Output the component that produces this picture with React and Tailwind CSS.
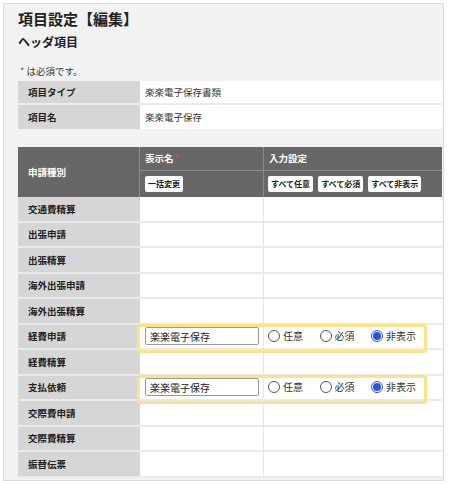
import React from "react";

const F = { fontFamily: '"Noto Sans CJK JP", "Noto Sans", sans-serif' };

function Radio({ checked, label }) {
  return (
    <div className="flex items-center w-[51.5px] shrink-0">
      {checked ? (
        <span className="w-[12px] h-[12px] rounded-full border border-[#2a56d1] flex items-center justify-center bg-white">
          <span className="w-[8px] h-[8px] rounded-full bg-[#2a56d1]" />
        </span>
      ) : (
        <span className="w-[12px] h-[12px] rounded-full border border-[#555] bg-white" />
      )}
      <span className="ml-[3px] text-[10px] leading-none text-[#333]">{label}</span>
    </div>
  );
}

const rows = [
  { n: "交通費精算" },
  { n: "出張申請" },
  { n: "出張精算" },
  { n: "海外出張申請" },
  { n: "海外出張精算" },
  { n: "経費申請", hl: true },
  { n: "経費精算" },
  { n: "支払依頼", hl: true },
  { n: "交際費申請" },
  { n: "交際費精算" },
  { n: "振替伝票" },
];

function HBtn({ children }) {
  return (
    <span className="bg-white rounded-[2px] px-[3px] h-[16px] flex items-center text-[8px] font-bold text-[#222] leading-none">
      {children}
    </span>
  );
}

export default function App() {
  return (
    <div className="w-[450px] h-[484px] bg-white pt-[3px] pl-[3px] overflow-hidden" style={F}>
      <div className="w-[441px] h-[478px] border border-[#dcdcdc] bg-[#f2f2f2] overflow-hidden pl-[14px]">
        <div className="mt-[5px] text-[15px] leading-[20px] font-bold text-[#222]">項目設定【編集】</div>
        <div className="mt-[5px] text-[12px] leading-[16px] font-bold text-[#222]">ヘッダ項目</div>
        <div className="mt-[14px] text-[9.5px] leading-[14px] text-[#333] pl-[2px]">
          <span className="text-[#d23c3c]">*</span> は必須です。
        </div>
        <div className="mt-[3px] w-[424px]">
          <div className="flex h-[24px] border-b-2 border-[#ececec]">
            <div className="w-[122px] bg-[#d6d6d6] pl-[10px] flex items-center text-[9.5px] font-bold text-[#222]">項目タイプ</div>
            <div className="flex-1 bg-white pl-[5px] flex items-center text-[9.5px] text-[#333]">楽楽電子保存書類</div>
          </div>
          <div className="flex h-[24px]">
            <div className="w-[122px] bg-[#d6d6d6] pl-[10px] flex items-center text-[9.5px] font-bold text-[#222]">項目名</div>
            <div className="flex-1 bg-white pl-[5px] flex items-center text-[9.5px] text-[#333]">楽楽電子保存</div>
          </div>
        </div>
        <div className="mt-[18px] w-[424px]">
          <div className="flex h-[50px] bg-[#676767] text-white">
            <div className="w-[122px] border-r border-[#8a8a8a] pl-[10px] flex items-center text-[9.5px] font-bold">申請種別</div>
            <div className="flex-1 flex flex-col">
              <div className="h-[24px] flex border-b border-[#8a8a8a]">
                <div className="w-[124px] border-r border-[#8a8a8a] pl-[5px] flex items-center text-[9.5px] font-bold">
                  表示名<span className="text-[#e04848] ml-[1px]">*</span>
                </div>
                <div className="flex-1 pl-[5px] flex items-center text-[9.5px] font-bold">入力設定</div>
              </div>
              <div className="flex-1 flex">
                <div className="w-[124px] border-r border-[#8a8a8a] pl-[5px] flex items-center">
                  <HBtn>一括変更</HBtn>
                </div>
                <div className="flex-1 pl-[4px] flex items-center gap-[5px]">
                  <HBtn>すべて任意</HBtn>
                  <HBtn>すべて必須</HBtn>
                  <HBtn>すべて非表示</HBtn>
                </div>
              </div>
            </div>
          </div>
          {rows.map((r) => (
            <div key={r.n} className={`relative flex h-[25.5px] border-b-2 border-[#eaeaea] ${r.hl ? "z-10" : ""}`}>
              <div className="w-[122px] bg-[#d6d6d6] pl-[10px] flex items-center text-[9.5px] font-bold text-[#222]">{r.n}</div>
              <div className="w-[124px] bg-white border-r border-[#e6e6e6] flex items-center pl-[5px]">
                {r.hl && (
                  <div className="w-[114px] h-[18px] border border-[#9a9a9a] rounded-[2px] bg-white pl-[4px] flex items-center text-[10px] text-[#222]">
                    楽楽電子保存
                  </div>
                )}
              </div>
              <div className="flex-1 bg-white flex items-center pl-[4px]">
                {r.hl && (
                  <>
                    <Radio label="任意" />
                    <Radio label="必須" />
                    <Radio checked label="非表示" />
                  </>
                )}
              </div>
              {r.hl && (
                <div className="absolute left-[119px] top-[-1px] w-[290px] h-[29px] border-[3px] border-[#fbe38b] rounded-[3px] z-10" />
              )}
            </div>
          ))}
        </div>
      </div>
    </div>
  );
}
